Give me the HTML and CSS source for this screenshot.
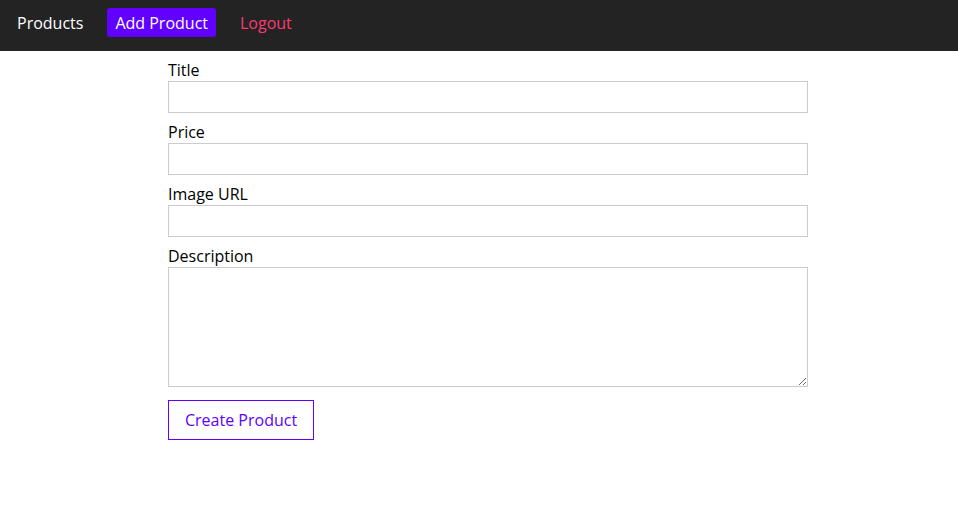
FILE: index.html
```html
<!DOCTYPE html>
<html>
<head>
<meta charset="utf-8">
<link rel="stylesheet" href="styles.css">
</head>
<body>
<header class="main-header">
  <nav class="main-nav">
    <a class="nav-link" href="#">Products</a>
    <a class="nav-link active" href="#">Add Product</a>
    <a class="nav-link logout" href="#">Logout</a>
  </nav>
</header>
<main class="page">
  <form class="product-form">
    <div class="form-control">
      <label class="label">Title</label>
      <input class="input" type="text">
    </div>
    <div class="form-control">
      <label class="label">Price</label>
      <input class="input" type="text">
    </div>
    <div class="form-control">
      <label class="label">Image URL</label>
      <input class="input" type="text">
    </div>
    <div class="form-control">
      <label class="label">Description</label>
      <textarea class="textarea"></textarea>
    </div>
    <button class="btn" type="button">Create Product</button>
  </form>
</main>
</body>
</html>
```
FILE: styles.css
```css
* { box-sizing: border-box; }
body {
  margin: 0;
  font-family: "Open Sans", "DejaVu Sans", sans-serif;
  font-size: 16px;
  color: #000;
  background: #fff;
}
.main-header {
  height: 51px;
  background: #232323;
  display: flex;
  align-items: flex-start;
  padding: 8px 9px 0;
}
.main-nav {
  display: flex;
  gap: 16px;
  align-items: flex-start;
}
.nav-link {
  display: block;
  color: #fff;
  text-decoration: none;
  padding: 5px 8px 3px;
  height: 29px;
  line-height: 21px;
  border-radius: 3px;
}
.nav-link.active {
  background: #6200ff;
}
.nav-link.logout {
  color: #fb3a72;
}
.page {
  padding: 8px 0 0 168px;
}
.product-form {
  width: 640px;
}
.form-control {
  display: flex;
  flex-direction: column;
  margin-bottom: 8px;
}
.label {
  line-height: 22px;
}
.input, .textarea {
  font: inherit;
  border: 1px solid #ccc;
  width: 100%;
  margin: 0;
  padding: 4px;
}
.input { height: 32px; }
.textarea { height: 120px; resize: vertical; }
.form-control:last-of-type { margin-bottom: 13px; }
.btn {
  font: inherit;
  color: #6200ff;
  background: #fff;
  border: 1px solid #6200ff;
  height: 40px;
  padding: 0 16px;
  cursor: pointer;
}
```
